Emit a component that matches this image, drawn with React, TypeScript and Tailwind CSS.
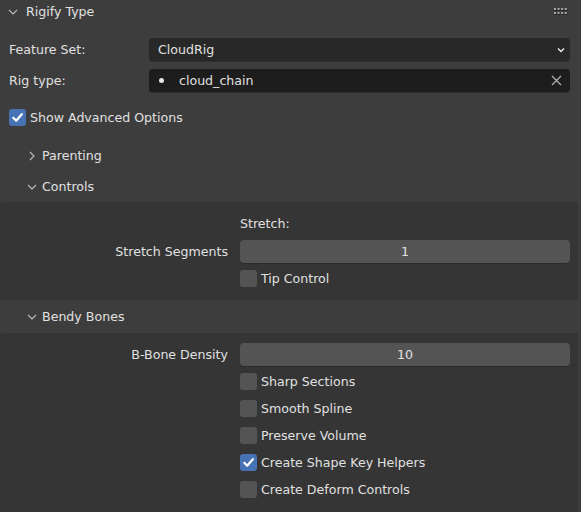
import React from "react";

const ChevronDown = ({ className = "" }: { className?: string }) => (
  <svg className={className} width="10" height="10" viewBox="0 0 10 10" fill="none">
    <path d="M1 3 L5 7 L9 3" stroke="#bdbdbd" strokeWidth="1.1" />
  </svg>
);

const ChevronRight = ({ className = "" }: { className?: string }) => (
  <svg className={className} width="10" height="10" viewBox="0 0 10 10" fill="none">
    <path d="M3 1 L7 5 L3 9" stroke="#bdbdbd" strokeWidth="1.1" />
  </svg>
);

const Check = () => (
  <svg width="13" height="13" viewBox="0 0 13 13" fill="none">
    <path d="M2.3 6.8 L5.2 9.7 L10.8 3.2" stroke="#ffffff" strokeWidth="2.2" strokeLinecap="round" strokeLinejoin="round" />
  </svg>
);

const Checkbox = ({ checked = false }: { checked?: boolean }) => (
  <div
    className={
      checked
        ? "w-[17px] h-[17px] rounded-[3px] bg-[#4772b3] flex items-center justify-center shrink-0"
        : "w-[17px] h-[17px] rounded-[3px] bg-[#545454] flex items-center justify-center shrink-0"
    }
  >
    {checked ? <Check /> : null}
  </div>
);

const Grip = () => (
  <svg width="16" height="8" viewBox="0 0 16 8">
    {[0, 1].map((r) =>
      [0, 1, 2, 3].map((c) => (
        <g key={`${r}-${c}`}>
          <rect x={c * 3.6 + 0.5} y={r * 4 + 1} width="2" height="2" fill="#1e1e1e" />
          <rect x={c * 3.6} y={r * 4} width="2" height="2" fill="#a8a8a8" />
        </g>
      ))
    )}
  </svg>
);

const CheckRow = ({ label, checked = false }: { label: string; checked?: boolean }) => (
  <div className="flex items-center h-[17px] mt-[10px] pl-[240px]">
    <Checkbox checked={checked} />
    <span className="ml-[4px] leading-none pt-[1px]">{label}</span>
  </div>
);

export default function App() {
  return (
    <div
      className="w-[581px] h-[512px] bg-[#3d3d3d] overflow-hidden text-[12.6px] text-[#e0e0e0]"
      style={{ fontFamily: '"DejaVu Sans", sans-serif' }}
    >
      {/* Header */}
      <div className="h-[24px] flex items-center pl-[8px] pr-[11px]">
        <ChevronDown className="shrink-0" />
        <span className="ml-[8px] leading-none pt-[1px]">Rigify Type</span>
        <div className="ml-auto">
          <Grip />
        </div>
      </div>

      {/* Feature Set */}
      <div className="mt-[14px] h-[23px] flex items-center">
        <span className="w-[149px] pl-[9px] leading-none pt-[1px]">Feature Set:</span>
        <div className="w-[421px] h-[23px] rounded-[4px] bg-[#282828] shadow-[0_1px_0_#2e2e2e] flex items-center pl-[9px] pr-[5px]">
          <span className="leading-none pt-[1px]">CloudRig</span>
          <svg className="ml-auto" width="8" height="6" viewBox="0 0 8 6" fill="none">
            <path d="M1 1.5 L4 4.5 L7 1.5" stroke="#e6e6e6" strokeWidth="1.5" />
          </svg>
        </div>
      </div>

      {/* Rig type */}
      <div className="mt-[8px] h-[23px] flex items-center">
        <span className="w-[149px] pl-[9px] leading-none pt-[1px]">Rig type:</span>
        <div className="w-[421px] h-[23px] rounded-[4px] bg-[#1d1d1d] shadow-[0_1px_0_#2e2e2e] flex items-center pl-[10px] pr-[8px]">
          <div className="w-[5px] h-[5px] rounded-full bg-[#e6e6e6]" />
          <span className="ml-[15px] leading-none pt-[1px]">cloud_chain</span>
          <svg className="ml-auto" width="11" height="11" viewBox="0 0 11 11" fill="none">
            <path d="M1 1 L10 10 M10 1 L1 10" stroke="#b0b0b0" strokeWidth="1.3" />
          </svg>
        </div>
      </div>

      {/* Show advanced */}
      <div className="mt-[14px] h-[23px] flex items-center pl-[9px]">
        <Checkbox checked />
        <span className="ml-[4px] leading-none pt-[1px]">Show Advanced Options</span>
      </div>

      {/* Parenting */}
      <div className="mt-[11px] h-[31px] flex items-center pl-[27px]">
        <ChevronRight className="shrink-0" />
        <span className="ml-[5px] leading-none pt-[2px]">Parenting</span>
      </div>

      {/* Controls */}
      <div className="h-[31px] flex items-center pl-[27px]">
        <ChevronDown className="shrink-0" />
        <span className="ml-[5px] leading-none pt-[2px]">Controls</span>
      </div>

      <div className="w-[578px] bg-[#353535] rounded-[3px] pb-[13px]">
        <div className="pt-[11px] h-[33px] flex items-center pl-[240px]">
          <span className="leading-none pt-[1px]">Stretch:</span>
        </div>
        <div className="mt-[5px] h-[23px] flex items-center">
          <span className="w-[228px] text-right leading-none pt-[1px]">Stretch Segments</span>
          <div className="ml-[12px] w-[330px] h-[23px] rounded-[4px] bg-[#545454] shadow-[0_1px_0_#2c2c2c] flex items-center justify-center">
            <span className="leading-none pt-[1px]">1</span>
          </div>
        </div>
        <div className="flex items-center h-[17px] mt-[7px] pl-[240px]">
          <Checkbox />
          <span className="ml-[4px] leading-none pt-[1px]">Tip Control</span>
        </div>
      </div>

      {/* Bendy Bones */}
      <div className="h-[33px] flex items-center pl-[27px]">
        <ChevronDown className="shrink-0" />
        <span className="ml-[5px] leading-none pt-[2px]">Bendy Bones</span>
      </div>

      <div className="w-[578px] h-[200px] bg-[#353535] rounded-[3px] pt-[10px]">
        <div className="h-[23px] flex items-center">
          <span className="w-[228px] text-right leading-none pt-[1px]">B-Bone Density</span>
          <div className="ml-[12px] w-[330px] h-[23px] rounded-[4px] bg-[#545454] shadow-[0_1px_0_#2c2c2c] flex items-center justify-center">
            <span className="leading-none pt-[1px]">10</span>
          </div>
        </div>
        <div className="flex items-center h-[17px] mt-[7px] pl-[240px]">
          <Checkbox />
          <span className="ml-[4px] leading-none pt-[1px]">Sharp Sections</span>
        </div>
        <CheckRow label="Smooth Spline" />
        <CheckRow label="Preserve Volume" />
        <CheckRow label="Create Shape Key Helpers" checked />
        <CheckRow label="Create Deform Controls" />
      </div>
    </div>
  );
}
